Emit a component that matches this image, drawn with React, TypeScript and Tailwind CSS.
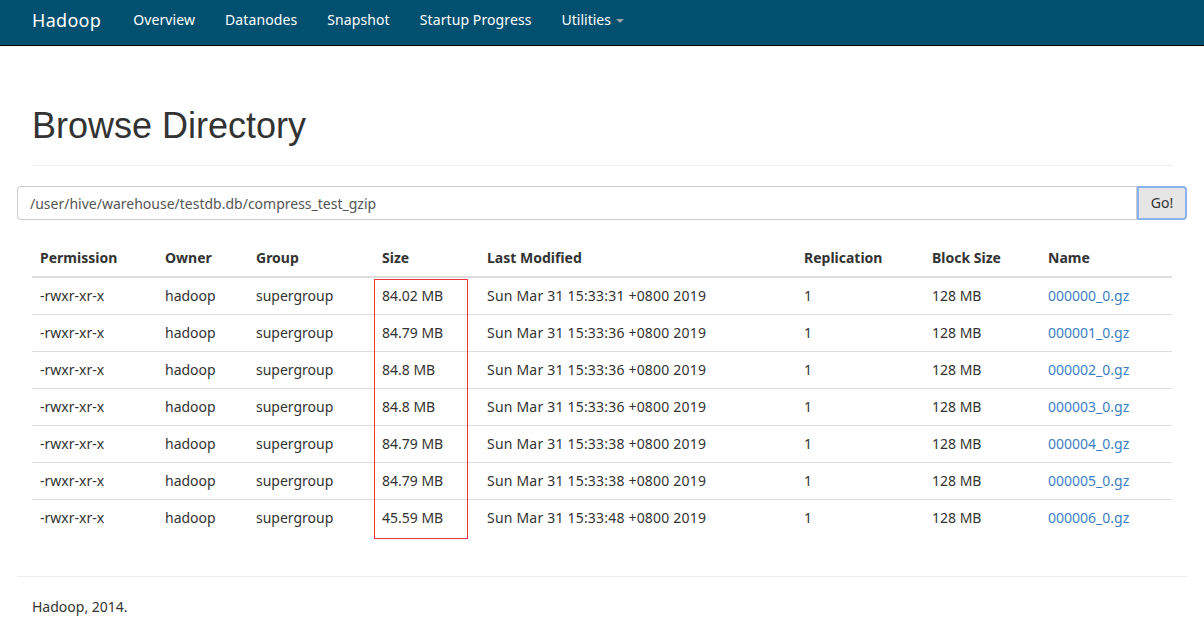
import React from 'react';

interface Arquivo {
  permission: string;
  owner: string;
  group: string;
  size: string;
  modified: string;
  replication: number;
  blockSize: string;
  name: string;
}

const arquivos: Arquivo[] = [
  { permission: '-rwxr-xr-x', owner: 'hadoop', group: 'supergroup', size: '84.02 MB', modified: 'Sun Mar 31 15:33:31 +0800 2019', replication: 1, blockSize: '128 MB', name: '000000_0.gz' },
  { permission: '-rwxr-xr-x', owner: 'hadoop', group: 'supergroup', size: '84.79 MB', modified: 'Sun Mar 31 15:33:36 +0800 2019', replication: 1, blockSize: '128 MB', name: '000001_0.gz' },
  { permission: '-rwxr-xr-x', owner: 'hadoop', group: 'supergroup', size: '84.8 MB', modified: 'Sun Mar 31 15:33:36 +0800 2019', replication: 1, blockSize: '128 MB', name: '000002_0.gz' },
  { permission: '-rwxr-xr-x', owner: 'hadoop', group: 'supergroup', size: '84.8 MB', modified: 'Sun Mar 31 15:33:36 +0800 2019', replication: 1, blockSize: '128 MB', name: '000003_0.gz' },
  { permission: '-rwxr-xr-x', owner: 'hadoop', group: 'supergroup', size: '84.79 MB', modified: 'Sun Mar 31 15:33:38 +0800 2019', replication: 1, blockSize: '128 MB', name: '000004_0.gz' },
  { permission: '-rwxr-xr-x', owner: 'hadoop', group: 'supergroup', size: '84.79 MB', modified: 'Sun Mar 31 15:33:38 +0800 2019', replication: 1, blockSize: '128 MB', name: '000005_0.gz' },
  { permission: '-rwxr-xr-x', owner: 'hadoop', group: 'supergroup', size: '45.59 MB', modified: 'Sun Mar 31 15:33:48 +0800 2019', replication: 1, blockSize: '128 MB', name: '000006_0.gz' },
];

const navLinks = ['Overview', 'Datanodes', 'Snapshot', 'Startup Progress'];

const Navbar: React.FC = () => {
  return (
    <nav className="h-[46px] bg-[#02506f] border-b border-black">
      <div className="w-[1170px] mx-auto px-[15px] h-full flex items-start pt-[10px]">
        <a className="text-[18px] text-white pr-[17px] leading-[20px] tracking-[0.3px]">Hadoop</a>
        {navLinks.map((link) => (
          <a key={link} className="px-[15px] text-[14px] text-white leading-[20px] tracking-[0.1px]">
            {link}
          </a>
        ))}
        <a className="px-[15px] text-[14px] text-white leading-[20px] flex items-center">
          Utilities
          <span className="inline-block ml-[5px] mt-[1px] w-0 h-0 border-x-[4px] border-t-[4px] border-x-transparent border-t-[#9aa5ad]"></span>
        </a>
      </div>
    </nav>
  );
};

export default function App() {
  return (
    <div className="min-h-[628px] bg-white text-[#333] text-[14px] leading-[20px] font-['Noto_Sans',sans-serif]">
      <Navbar />
      <div className="w-[1170px] mx-auto px-[15px]">
        <div className="mt-[60px] pb-[9px] border-b border-[#eee]">
          <h1 className="text-[36px] leading-[40px] mb-[10px] text-[#333] font-['Liberation_Sans',Arial,sans-serif]">
            Browse Directory
          </h1>
        </div>

        <div className="-mx-[15px] mt-[20px] flex h-[34px]">
          <input
            readOnly
            value="/user/hive/warehouse/testdb.db/compress_test_gzip"
            className="flex-1 h-full px-[12px] border border-[#ccc] rounded-l-[4px] text-[14px] text-[#555] outline-none"
          />
          <button className="w-[50px] h-full bg-[#e6e6e6] border-2 border-[#8ab2ec] rounded-r-[4px] text-[14px] text-[#333]">
            Go!
          </button>
        </div>

        <div className="relative mt-[20px] mb-[20px]">
          <table className="w-full table-fixed border-collapse">
            <thead>
              <tr className="border-b-2 border-[#ddd] text-left">
                <th className="w-[125px] p-[8px] font-bold">Permission</th>
                <th className="w-[91px] p-[8px] font-bold">Owner</th>
                <th className="w-[126px] p-[8px] font-bold">Group</th>
                <th className="w-[105px] p-[8px] font-bold">Size</th>
                <th className="w-[317px] p-[8px] font-bold">Last Modified</th>
                <th className="w-[128px] p-[8px] font-bold">Replication</th>
                <th className="w-[116px] p-[8px] font-bold">Block Size</th>
                <th className="p-[8px] font-bold">Name</th>
              </tr>
            </thead>
            <tbody>
              {arquivos.map((a) => (
                <tr key={a.name} className="border-t border-[#ddd]">
                  <td className="p-[8px]">{a.permission}</td>
                  <td className="p-[8px]">{a.owner}</td>
                  <td className="p-[8px]">{a.group}</td>
                  <td className="p-[8px]">{a.size}</td>
                  <td className="p-[8px] tracking-[0.2px]">{a.modified}</td>
                  <td className="p-[8px]">{a.replication}</td>
                  <td className="p-[8px]">{a.blockSize}</td>
                  <td className="p-[8px]">
                    <a className="text-[#3d80c3]">{a.name}</a>
                  </td>
                </tr>
              ))}
            </tbody>
          </table>
          {/* marcação vermelha na coluna Size */}
          <div className="absolute left-[342px] top-[39px] w-[94px] h-[260px] border border-[#e8383d] pointer-events-none"></div>
        </div>
      </div>

      <div className="w-[1170px] mx-auto">
        <hr className="mt-[40px] mb-[20px] border-t border-[#eee]" />
        <p className="px-[15px]">Hadoop, 2014.</p>
      </div>
    </div>
  );
}
